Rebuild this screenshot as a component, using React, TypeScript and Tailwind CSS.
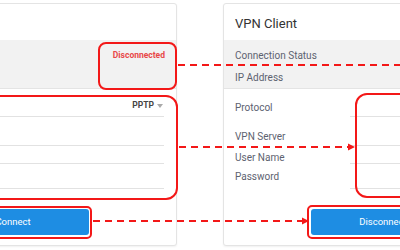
import React from 'react';

interface PanelProps {
  status: string;
  protocol: string;
  button: string;
  buttonClass: string;
}

function Panel({ status, protocol, button, buttonClass }: PanelProps) {
  const rows = [
    { label: 'Protocol', h: 'h-[28px]', pt: 'pt-[13px]' },
    { label: 'VPN Server', h: 'h-[29px]', pt: 'pt-[14px]' },
    { label: 'User Name', h: 'h-[18px]', pt: 'pt-[6px]' },
    { label: 'Password', h: 'h-[25px]', pt: 'pt-[7px]' },
  ];

  return (
    <div className="w-[305px] shrink-0 h-[243px] bg-white border border-[#e4e4e4] rounded-[3px] shadow-[0_1px_2px_rgba(0,0,0,0.06)] flex flex-col">
      <div className="h-[36px] flex items-center pt-[3px] px-[11px] text-[13px] text-[#333] leading-none">VPN Client</div>
      <div className="bg-[#f2f2f2] pt-[4px] border-b border-[#e4e4e4] text-[10px] text-[#5d6270]">
        <div className="h-[22px] flex items-center justify-between px-[11px]">
          <span>Connection Status</span>
          <span className="font-bold text-[8.5px] text-[#e84848]">{status}</span>
        </div>
        <div className="h-[22px] flex items-center px-[11px]">
          <span>IP Address</span>
        </div>
      </div>
      <div className="text-[10px] text-[#5d6270]">
        {rows.map((r, i) => (
          <div key={r.label} className={`flex ${r.h}`}>
            <div className={`w-[126px] pl-[11px] leading-[12px] ${r.pt}`}>{r.label}</div>
            <div className="w-[165px] border-b border-[#e2e2e2] relative">
              {i === 0 && protocol && (
                <div className="absolute right-[1px] bottom-[4px] flex items-center gap-[3px] text-[8.5px] font-bold text-[#444]">
                  <span>{protocol}</span>
                  <span className="w-0 h-0 border-l-[3.5px] border-r-[3.5px] border-t-[4px] border-l-transparent border-r-transparent border-t-[#aaa]" />
                </div>
              )}
            </div>
          </div>
        ))}
      </div>
      <div className={`mt-[20px] h-[26px] rounded-[3px] bg-[#1e8de3] text-white text-[9.5px] flex items-center justify-center ${buttonClass}`}>
        {button}
      </div>
    </div>
  );
}

export default function App() {
  return (
    <div className="relative w-[400px] h-[250px] overflow-hidden bg-white" style={{ fontFamily: 'Roboto, "Liberation Sans", sans-serif' }}>
      <div className="flex gap-[46px] ml-[-128px] pt-[3px]">
        <Panel status="Disconnected" protocol="PPTP" button="Connect" buttonClass="ml-[64px] w-[152px]" />
        <Panel status="" protocol="" button="Disconnect" buttonClass="ml-[87px] w-[144px]" />
      </div>

      {/* annotation boxes */}
      <div className="absolute left-[98px] top-[42px] w-[79px] h-[48px] border-2 border-[#f31818] rounded-[8px]" />
      <div className="absolute left-[-20px] top-[95px] w-[198px] h-[105px] border-2 border-[#f31818] rounded-[12px]" />
      <div className="absolute left-[355px] top-[93px] w-[80px] h-[105px] border-2 border-[#f31818] rounded-[12px]" />
      <div className="absolute left-[-20px] top-[206px] w-[112px] h-[33px] border-2 border-[#f31818] rounded-[5px]" />
      <div className="absolute left-[307px] top-[205px] w-[120px] h-[34px] border-2 border-[#f31818] rounded-[5px]" />

      <svg className="absolute left-0 top-0" width="400" height="250">
        <g stroke="#f31818" strokeWidth="2" strokeDasharray="7 5" fill="none">
          <line x1="178" y1="65" x2="400" y2="65" />
          <line x1="179" y1="147" x2="348" y2="147" />
          <line x1="93" y1="221" x2="302" y2="221" />
        </g>
        <polygon points="348,143.5 355,147 348,150.5" fill="#f31818" />
        <polygon points="302,217.5 309,221 302,224.5" fill="#f31818" />
      </svg>
    </div>
  );
}
